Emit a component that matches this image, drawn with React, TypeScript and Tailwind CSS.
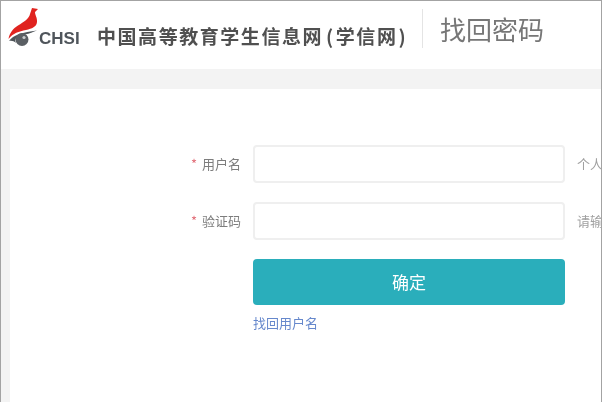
const cjk = "font-['Noto_Sans_CJK_SC','Liberation_Sans',sans-serif]";

const Logo = () => (
  <div className="flex items-end w-[73px] h-[38px] shrink-0">
    <svg width="32" height="38" viewBox="0 0 32 38" className="shrink-0">
      {/* red bird */}
      <path
        d="M24 0 L30 1 L27 4 C27 7 29.5 10 29 14 C28.5 19 24 20.5 18 22 C11 23.5 5 25 0.5 31 C1.5 25 5 20.5 10 17.5 C16 14 21 10.5 22 6 Z"
        fill="#e0231f"
      />
      {/* dark swoosh and ball */}
      <path
        d="M1 33 C5 27 15 24 29 22.5 C23 25 20 26 16.5 26.5 C12 27.5 9 29 7.5 31 C7 33 7.5 34 8 35 C6 33 3.5 32.5 1 33 Z"
        fill="#4f555a"
      />
      <circle cx="14" cy="31.5" r="6.5" fill="#5a5f64" />
      <circle cx="16" cy="29.5" r="1.6" fill="#c9ccce" />
    </svg>
    <span className="font-['Liberation_Sans',sans-serif] font-bold text-[17px] leading-none text-[#4f555b] -ml-[1px] mb-[-0.5px]">
      CHSI
    </span>
  </div>
);

const Field = ({ label, hint }: { label: string; hint: string }) => (
  <div className="flex items-center h-[38px]">
    <label className="w-[72px] shrink-0 text-right pr-3 text-[13px] text-[#7d7d7d] whitespace-nowrap">
      <span className="text-[#e2707a] mr-[5px]">*</span>
      {label}
    </label>
    <input className="w-[312px] h-[38px] shrink-0 rounded border-2 border-[#efefef] bg-white" />
    <span className="ml-3 text-[13px] text-[#a0a0a0] whitespace-nowrap">{hint}</span>
  </div>
);

export default function App() {
  return (
    <div className={`${cjk} w-[602px] h-[402px] overflow-hidden border border-b-0 border-[#a3a3a3] bg-[#f3f3f3] flex flex-col blur-[0.5px]`}>
      {/* Header */}
      <header className="h-[68px] shrink-0 bg-white flex items-start pl-[7px]">
        <div className="mt-[7px] flex items-end">
          <Logo />
        </div>
        <h1 className="ml-[16px] mt-[21px] w-[312px] flex text-[19px] leading-[28px] font-semibold text-[#505050] tracking-[1.55px] whitespace-nowrap">
          中国高等教育学生信息网
          <span className="ml-[3px]">(</span>
          <span className="ml-[1px]">学信网</span>
          <span className="ml-[1px]">)</span>
        </h1>
        <div className="ml-[13px] mt-[8px] w-px h-[39px] bg-[#e4e4e4]" />
        <div className="ml-[17px] mt-[10px] text-[26px] leading-[36px] text-[#777]">找回密码</div>
      </header>

      {/* Form panel */}
      <main className="mt-5 ml-[9px] flex-1 bg-white pt-[56px] pl-[171px]">
        <div className="flex flex-col gap-[19px]">
          <Field label="用户名" hint="个人" />
          <Field label="验证码" hint="请输" />
        </div>
        <div className="ml-[72px] w-[312px]">
          <button className="mt-[19px] w-full h-[46px] rounded bg-[#2aaebb] text-white text-[17px]">确定</button>
          <a className="block mt-[9px] text-[13px] leading-[18px] text-[#6688cc]">找回用户名</a>
        </div>
      </main>
    </div>
  );
}
